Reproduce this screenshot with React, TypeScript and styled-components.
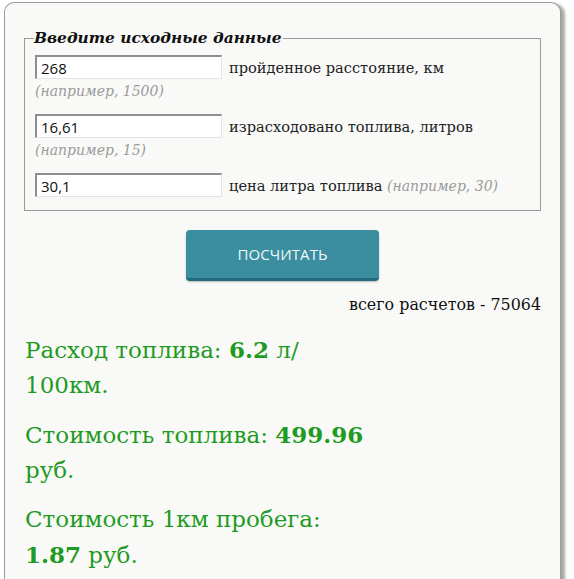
import styled, { createGlobalStyle } from "styled-components";

const GlobalStyle = createGlobalStyle`
  html, body {
    margin: 0;
    padding: 0;
    background: #ffffff;
  }
  body {
    font-family: "DejaVu Serif", "Liberation Serif", serif;
  }
`;

const Card = styled.div`
  margin: 2px 0 0 4px;
  width: 557px;
  min-height: 600px;
  box-sizing: border-box;
  padding: 26px 19px 0 19px;
  background: #f9faf8;
  border: 1px solid #9a9d99;
  border-bottom: none;
  border-radius: 10px 10px 0 0;
  box-shadow: 4px 2px 3px rgba(90, 100, 90, 0.55);
`;

const Fieldset = styled.fieldset`
  margin: 0;
  padding: 8px 10px 13px 10px;
  border: 1px solid #9a9a9a;
`;

const Legend = styled.legend`
  padding: 0 1px 0 0;
  margin-left: -1px;
  font-size: 15.4px;
  font-weight: bold;
  font-style: italic;
  color: #111;
`;

const Row = styled.div<{ $last?: boolean }>`
  margin-bottom: ${(p) => (p.$last ? "0" : "14px")};
`;

const Line = styled.div`
  display: flex;
  align-items: center;
  gap: 7px;
`;

const Input = styled.input`
  width: 187px;
  height: 24px;
  box-sizing: border-box;
  padding: 1px 4px 0;
  font-family: "Open Sans", "DejaVu Sans", sans-serif;
  font-size: 15px;
  color: #111;
  background: #ffffff;
  border-style: solid;
  border-width: 2px 1px 1px 2px;
  border-color: #8e8e8e #e4e4e4 #e4e4e4 #8e8e8e;
  outline: none;
`;

const Label = styled.span`
  font-size: 14.6px;
  color: #222;
`;

const Hint = styled.span`
  font-size: 14px;
  font-style: italic;
  color: #9a9a9a;
`;

const HintLine = styled.div`
  margin-top: 2px;
`;

const ButtonWrap = styled.div`
  display: flex;
  justify-content: center;
  padding: 19px 0 0 0;
`;

const Button = styled.button`
  width: 193px;
  height: 51px;
  box-sizing: border-box;
  background: #3a8e9f;
  color: #f2f8f9;
  border: none;
  border-bottom: 3px solid #226b7b;
  border-radius: 4px;
  font-family: "Open Sans", "Noto Sans", sans-serif;
  font-size: 15px;
  letter-spacing: 0.1px;
  padding-top: 1px;
  box-shadow: 0 1px 2px rgba(0, 0, 0, 0.25);
`;

const Counter = styled.div`
  text-align: right;
  font-size: 15.9px;
  color: #111;
  margin-top: 14px;
`;

const Results = styled.div`
  margin-top: 18px;
  padding-left: 1px;
`;

const Result = styled.p`
  margin: 0 0 14px 0;
  font-size: 23px;
  line-height: 35px;
  color: #1f9a22;
`;

const Value = styled.b`
  font-weight: bold;
`;

const App = () => {
  return (
    <>
      <GlobalStyle />
      <Card>
        <Fieldset>
          <Legend>Введите исходные данные</Legend>
          <Row>
            <Line>
              <Input defaultValue="268" />
              <Label>пройденное расстояние, км</Label>
            </Line>
            <HintLine>
              <Hint>(например, 1500)</Hint>
            </HintLine>
          </Row>
          <Row>
            <Line>
              <Input defaultValue="16,61" />
              <Label>израсходовано топлива, литров</Label>
            </Line>
            <HintLine>
              <Hint>(например, 15)</Hint>
            </HintLine>
          </Row>
          <Row $last>
            <Line>
              <Input defaultValue="30,1" />
              <Label>
                цена литра топлива <Hint>(например, 30)</Hint>
              </Label>
            </Line>
          </Row>
        </Fieldset>
        <ButtonWrap>
          <Button>ПОСЧИТАТЬ</Button>
        </ButtonWrap>
        <Counter>всего расчетов - 75064</Counter>
        <Results>
          <Result>
            Расход топлива: <Value>6.2</Value> л/
            <br />
            100км.
          </Result>
          <Result>
            Стоимость топлива: <Value>499.96</Value>
            <br />
            руб.
          </Result>
          <Result>
            Стоимость 1км пробега:
            <br />
            <Value>1.87</Value> руб.
          </Result>
        </Results>
      </Card>
    </>
  );
};

export default App;
